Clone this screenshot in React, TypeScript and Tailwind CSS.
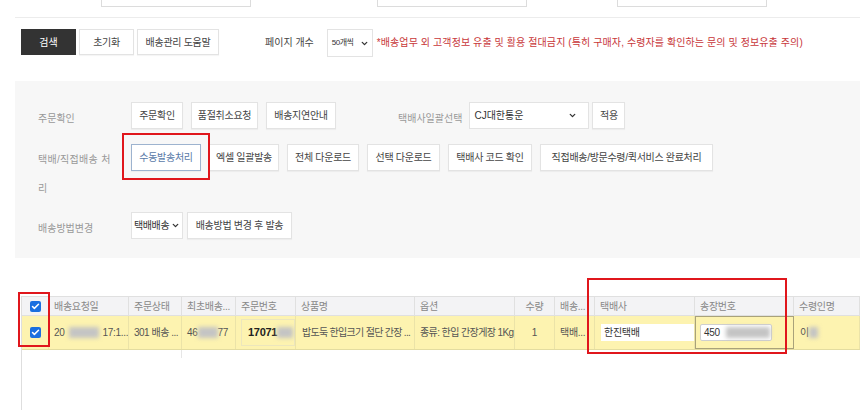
import { ChevronDown, Check } from "lucide-react";

const FONT = "font-['Liberation_Sans','Noto_Sans_CJK_KR',sans-serif]";

function Btn({ children, className = "" }: { children: React.ReactNode; className?: string }) {
  return (
    <div
      className={`flex h-[27px] items-center justify-center whitespace-nowrap border border-[#e3e3e3] bg-white text-[10px] tracking-[-0.3px] text-[#444] shadow-[0_1px_1px_rgba(0,0,0,0.04)] ${className}`}
    >
      {children}
    </div>
  );
}

function Box() {
  return (
    <div className="flex h-[11px] w-[11px] items-center justify-center rounded-[2px] bg-[#1a6fe0]">
      <Check className="h-[9px] w-[9px] text-white" strokeWidth={4} />
    </div>
  );
}

function Blur({ w }: { w: number }) {
  return (
    <span
      className="inline-block h-[11px] shrink-0 bg-[#c4c4c4] align-middle blur-[2px]"
      style={{ width: w }}
    />
  );
}

const COLS = [
  { key: "chk", w: 27, label: "" },
  { key: "date", w: 80, label: "배송요청일" },
  { key: "status", w: 53, label: "주문상태" },
  { key: "first", w: 54, label: "최초배송..." },
  { key: "no", w: 60, label: "주문번호" },
  { key: "name", w: 119, label: "상품명" },
  { key: "opt", w: 100, label: "옵션" },
  { key: "qty", w: 40, label: "수량" },
  { key: "ship", w: 40, label: "배송..." },
  { key: "courier", w: 100, label: "택배사" },
  { key: "invoice", w: 99, label: "송장번호" },
  { key: "recv", w: 66, label: "수령인명" },
  { key: "more", w: 60, label: "" },
];

const cell = "flex shrink-0 items-center overflow-hidden whitespace-nowrap border-r border-[#ebe3a8]";

export default function App() {
  return (
    <div className={`relative h-[410px] w-[860px] overflow-hidden bg-white ${FONT}`}>
      {/* top remnants */}
      <div className="flex h-[7px]">
        <div className="ml-[101px] h-[7px] w-[150px] border border-t-0 border-[#dcdcdc]" />
        <div className="ml-[126px] h-[7px] w-[150px] border border-t-0 border-[#dcdcdc]" />
        <div className="ml-[90px] h-[7px] w-[150px] border border-t-0 border-[#dcdcdc]" />
      </div>
      <div className="ml-[15px] mt-[10px] h-px bg-[#ececec]" />

      {/* search bar */}
      <div className="ml-[21px] mt-[11px] flex items-start">
        <div className="flex h-[26px] w-[55px] items-center justify-center bg-[#333] text-[10px] text-white">
          검색
        </div>
        <Btn className="ml-[3px] w-[55px] !h-[26px]">초기화</Btn>
        <Btn className="ml-[3px] w-[82px] !h-[26px]">배송관리 도움말</Btn>
        <div className="ml-[46px] flex h-[26px] items-center text-[10px] text-[#444]">페이지 개수</div>
        <div className="ml-[13px] flex h-[28px] w-[46px] items-center justify-between whitespace-nowrap border border-[#e3e3e3] bg-white pl-[4px] pr-[3px] text-[8px] tracking-[-0.5px] text-[#333]">
          50개씩
          <ChevronDown className="h-[9px] w-[9px]" strokeWidth={3.5} />
        </div>
        <div className="ml-[4px] flex h-[26px] items-center whitespace-nowrap text-[10px] tracking-[0.1px] text-[#c8373a]">
          *배송업무 외 고객정보 유출 및 활용 절대금지 (특히 구매자, 수령자를 확인하는 문의 및 정보유출 주의)
        </div>
      </div>

      {/* gray panel */}
      <div className="ml-[15px] mt-[24px] h-[177px] bg-[#f7f7f7] pl-[23px] pt-[21px]">
        <div className="flex items-start">
          <div className="w-[93px] pt-[2px] text-[10px] leading-[29px] text-[#999]">주문확인</div>
          <div className="flex gap-[8px]">
            <Btn className="w-[52px]">주문확인</Btn>
            <Btn className="w-[67px]">품절취소요청</Btn>
            <Btn className="w-[70px]">배송지연안내</Btn>
          </div>
          <div className="ml-[62px] whitespace-nowrap pt-[2px] text-[10px] leading-[29px] text-[#999]">택배사일괄선택</div>
          <div className="ml-[7px] flex h-[27px] w-[120px] items-center justify-between whitespace-nowrap border border-[#e3e3e3] bg-white pl-[4px] pr-[11px] text-[10px] text-[#333]">
            CJ대한통운
            <ChevronDown className="h-[9px] w-[9px]" strokeWidth={3.5} />
          </div>
          <Btn className="ml-[3px] w-[33px]">적용</Btn>
        </div>

        <div className="mt-[11px] flex items-start">
          <div className="w-[93px] shrink-0 break-all pr-[18px] pt-[1px] text-[10px] leading-[29px] tracking-[0.3px] text-[#999]">
            택배/직접배송 처리
          </div>
          <div className="flex gap-[8px]">
            <div className="relative">
              <Btn className="w-[70px] !border-[#9db3cf] !text-[#5a7aa8]">수동발송처리</Btn>
              <div className="absolute -left-[9px] -top-[11px] h-[47px] w-[88px] border-2 border-[#e0161c]" />
            </div>
            <Btn className="w-[70px]">엑셀 일괄발송</Btn>
            <Btn className="w-[72px]">전체 다운로드</Btn>
            <Btn className="w-[73px]">선택 다운로드</Btn>
            <Btn className="w-[84px]">택배사 코드 확인</Btn>
            <Btn className="w-[173px]">직접배송/방문수령/퀵서비스 완료처리</Btn>
          </div>
        </div>

        <div className="mt-[9px] flex items-start">
          <div className="w-[93px] pt-[2px] text-[10px] leading-[29px] text-[#999]">배송방법변경</div>
          <div className="flex h-[27px] w-[52px] items-center justify-between whitespace-nowrap border border-[#e3e3e3] bg-white pl-[2px] pr-[2px] text-[10px] tracking-[-0.4px] text-[#333]">
            택배배송
            <ChevronDown className="h-[9px] w-[9px] shrink-0" strokeWidth={3.5} />
          </div>
          <Btn className="ml-[4px] w-[105px]">배송방법 변경 후 발송</Btn>
        </div>
      </div>

      {/* grid */}
      <div className="relative ml-[21px] mt-[38px] h-[120px] border-l border-[#dedede]">
        <div className="flex h-[20px] border-y border-[#e0e0e0] bg-[#f3f3f5]">
          {COLS.map((c) => (
            <div
              key={c.key}
              style={{ width: c.w }}
              className={`flex shrink-0 items-center overflow-hidden whitespace-nowrap border-r border-[#e0e0e0] text-[10px] tracking-[-0.3px] text-[#888] ${
                c.key === "chk" || c.key === "qty" ? "justify-center" : "pl-[5px]"
              }`}
            >
              {c.key === "chk" ? <Box /> : c.label}
            </div>
          ))}
        </div>
        <div className="flex h-[34px] border-b border-[#e3dca0] bg-[#fdf3b0] text-[10px] tracking-[-0.3px] text-[#555]">
          <div className={`${cell} w-[27px] justify-center`}>
            <Box />
          </div>
          <div className={`${cell} w-[80px] pl-[5px]`}>
            20<span className="ml-[4px] flex"><Blur w={30} /></span><span className="ml-[4px]">17:1...</span>
          </div>
          <div className={`${cell} w-[53px] pl-[5px] tracking-[-0.5px]`}>301 배송 ...</div>
          <div className={`${cell} w-[54px] pl-[5px]`}>
            46<Blur w={20} />77
          </div>
          <div className={`${cell} w-[60px] pl-[5px]`}>
            <div className="flex h-[27px] w-full items-center border border-[#ece6bd] pl-[6px] text-[11px] font-bold text-[#222]">
              17071<Blur w={16} />
            </div>
          </div>
          <div className={`${cell} w-[119px] pl-[6px] tracking-[-0.7px]`}>밥도둑 한입크기 절단 간장 ...</div>
          <div className={`${cell} w-[100px] pl-[5px] tracking-[-0.6px]`}>종류: 한입 간장게장 1Kg</div>
          <div className={`${cell} w-[40px] justify-center`}>1</div>
          <div className={`${cell} w-[40px] pl-[5px]`}>택배...</div>
          <div className={`${cell} w-[100px] pl-[6px]`}>
            <div className="flex h-[17px] w-full items-center bg-white pl-[3px] text-[#333]">한진택배</div>
          </div>
          <div className="flex w-[99px] shrink-0 items-center overflow-hidden border border-[#a9a27a] pl-[4px]">
            <div className="flex h-[17px] w-[72px] items-center rounded-[2px] border border-[#cfcfcf] bg-white pl-[3px] text-[#333]">
              450<span className="ml-[6px] flex"><Blur w={44} /></span>
            </div>
          </div>
          <div className={`${cell} w-[66px] pl-[6px]`}>
            이<Blur w={9} />
          </div>
          <div className="w-[60px] shrink-0" />
        </div>
        <div className="ml-[159px] h-[8px] w-px bg-[#e6e6e6]" />

        {/* highlight boxes */}
        <div className="absolute -left-[4px] -top-[4px] h-[55px] w-[32px] border-2 border-[#e0161c]" />
        <div className="absolute left-[565px] -top-[18px] h-[76px] w-[200px] border-2 border-[#e0161c]" />
      </div>
    </div>
  );
}
